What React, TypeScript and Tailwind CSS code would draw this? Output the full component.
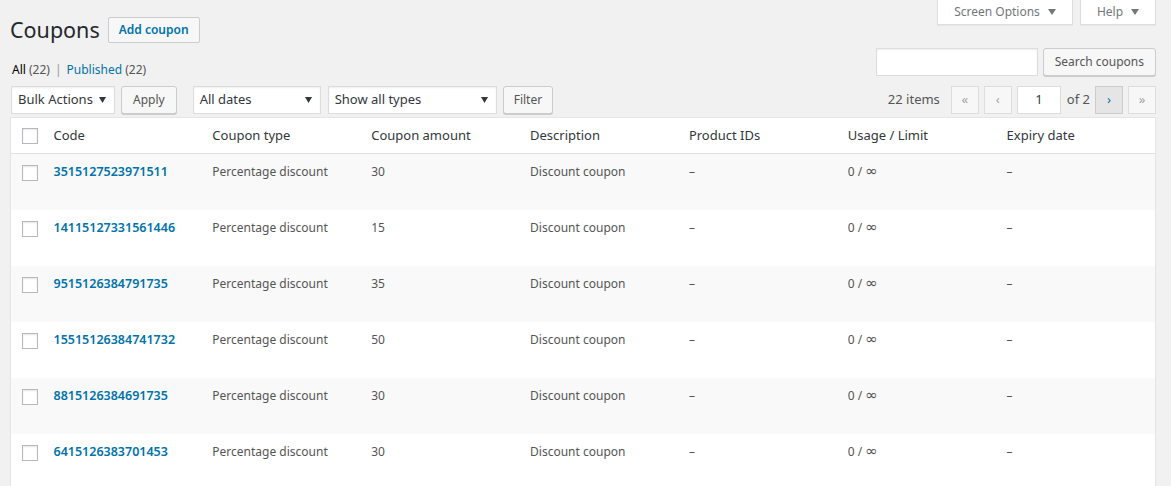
import React from "react";

const rows = [
  { code: "3515127523971511", amount: "30" },
  { code: "14115127331561446", amount: "15" },
  { code: "9515126384791735", amount: "35" },
  { code: "15515126384741732", amount: "50" },
  { code: "8815126384691735", amount: "30" },
  { code: "6415126383701453", amount: "30" },
];

function Checkbox() {
  return (
    <span className="block w-4 h-4 bg-white border border-[#b4b9be] shadow-[inset_0_1px_2px_rgba(0,0,0,0.1)]" />
  );
}

function Caret() {
  return (
    <svg width="7" height="6" viewBox="0 0 7 6" className="shrink-0">
      <path d="M0 0 L7 0 L3.5 6 Z" fill="#32373c" />
    </svg>
  );
}

function Select({ label, width }: { label: string; width: string }) {
  return (
    <div
      className={`${width} h-[28px] bg-white border border-[#ddd] shadow-[inset_0_1px_2px_rgba(0,0,0,0.07)] flex items-center justify-between pl-[6px] pr-[8px] text-[13px] text-[#32373c] whitespace-nowrap`}
    >
      <span>{label}</span>
      <Caret />
    </div>
  );
}

function Button({ children, className = "" }: { children: React.ReactNode; className?: string }) {
  return (
    <div
      className={`h-[28px] flex items-center bg-[#f7f7f7] border border-[#ccc] rounded-[3px] shadow-[0_1px_0_#ccc] text-[12px] text-[#555] whitespace-nowrap ${className}`}
    >
      {children}
    </div>
  );
}

function PageBtn({ children, active = false }: { children: React.ReactNode; active?: boolean }) {
  return (
    <div
      className={`w-[28px] h-[28px] flex items-center justify-center border text-[13px] ${
        active ? "bg-[#e5e5e5] border-[#ccc] text-[#0073aa]" : "bg-[#f7f7f7] border-[#ddd] text-[#a0a5aa]"
      }`}
    >
      {children}
    </div>
  );
}

const inf = (
  <span style={{ fontFamily: '"DejaVu Sans", sans-serif' }} className="text-[15px] leading-none">
    ∞
  </span>
);

export default function App() {
  return (
    <div
      className="relative w-[1171px] h-[486px] overflow-hidden bg-[#f1f1f1] text-[12px] text-[#444]"
      style={{ fontFamily: '"Noto Sans", "Open Sans", sans-serif' }}
    >
      {/* Screen meta tabs */}
      <div className="absolute top-0 right-[15px] flex gap-[7px]">
        <div className="w-[136px] h-[25px] bg-white border border-t-0 border-[#ddd] shadow-[0_1px_1px_rgba(0,0,0,0.04)] flex items-center justify-center gap-[8px] text-[12px] text-[#72777c]">
          <span>Screen Options</span>
          <svg width="8" height="6" viewBox="0 0 8 6"><path d="M0 0 L8 0 L4 6 Z" fill="#72777c" /></svg>
        </div>
        <div className="w-[76px] h-[25px] bg-white border border-t-0 border-[#ddd] shadow-[0_1px_1px_rgba(0,0,0,0.04)] flex items-center justify-center gap-[8px] text-[12px] text-[#72777c]">
          <span>Help</span>
          <svg width="8" height="6" viewBox="0 0 8 6"><path d="M0 0 L8 0 L4 6 Z" fill="#72777c" /></svg>
        </div>
      </div>

      <div className="pl-[10px] pr-[15px] pt-[17px]">
        {/* Title row */}
        <div className="flex items-center gap-[8px] h-[26px]">
          <h1 className="text-[21.5px] font-normal text-[#23282d] leading-none pb-[1px]">Coupons</h1>
          <div className="h-[26px] px-[10px] flex items-center bg-[#f7f7f7] border border-[#ccc] rounded-[2px] text-[12px] font-semibold text-[#0073aa]">
            Add coupon
          </div>
        </div>

        {/* Subsubsub + search */}
        <div className="flex justify-between items-end mt-[5px]">
          <div className="text-[12px] leading-[18px] mb-[-3px] pl-[2px]">
            <span className="text-black">All</span> <span className="text-[#555]">(22)</span>
            <span className="text-[#999] mx-[5px]">|</span>
            <span className="text-[#0073aa]">Published</span> <span className="text-[#555]">(22)</span>
          </div>
          <div className="flex items-center gap-[5px]">
            <div className="w-[162px] h-[28px] bg-white border border-[#ddd] shadow-[inset_0_1px_2px_rgba(0,0,0,0.07)]" />
            <Button className="px-[11px]">Search coupons</Button>
          </div>
        </div>

        {/* Tablenav */}
        <div className="flex justify-between items-center mt-[10px] h-[28px]">
          <div className="flex items-center pl-[1px]">
            <Select label="Bulk Actions" width="w-[104px]" />
            <Button className="ml-[6px] px-[11px]">Apply</Button>
            <Select label="All dates" width="w-[128px] ml-[16px]" />
            <Select label="Show all types" width="w-[169px] ml-[7px]" />
            <Button className="ml-[6px] px-[10px]">Filter</Button>
          </div>
          <div className="flex items-center text-[12px] text-[#555]">
            <span className="mr-[11px] text-[13px]">22 items</span>
            <PageBtn>«</PageBtn>
            <div className="ml-[5px]"><PageBtn>‹</PageBtn></div>
            <div className="ml-[5px] w-[44px] h-[28px] bg-white border border-[#ddd] flex items-center justify-center text-[13px] text-[#32373c]">1</div>
            <span className="ml-[6px] mr-[5px] text-[13px] text-[#555]">of 2</span>
            <PageBtn active>›</PageBtn>
            <div className="ml-[5px]"><PageBtn>»</PageBtn></div>
          </div>
        </div>

        {/* Table */}
        <table className="mt-[3px] w-full table-fixed border-collapse bg-white border border-[#e5e5e5] shadow-[0_1px_1px_rgba(0,0,0,0.04)]">
          <colgroup>
            <col className="w-[33px]" />
            <col />
            <col />
            <col />
            <col />
            <col />
            <col />
            <col />
          </colgroup>
          <thead>
            <tr className="h-[36px] border-b border-[#e1e1e1] text-left text-[13px] text-[#32373c]">
              <th className="pl-[11px] align-middle font-normal"><Checkbox /></th>
              <th className="px-[10px] font-normal">Code</th>
              <th className="px-[10px] font-normal">Coupon type</th>
              <th className="px-[10px] font-normal">Coupon amount</th>
              <th className="px-[10px] font-normal">Description</th>
              <th className="px-[10px] font-normal">Product IDs</th>
              <th className="px-[10px] font-normal">Usage / Limit</th>
              <th className="px-[10px] font-normal">Expiry date</th>
            </tr>
          </thead>
          <tbody>
            {rows.map((r, i) => (
              <tr key={r.code} className={`h-[56px] text-[12px] text-[#555] ${i % 2 === 0 ? "bg-[#f9f9f9]" : "bg-white"}`}>
                <td className="pl-[11px] pt-[11px] align-top"><Checkbox /></td>
                <td className="px-[10px] pt-[9px] align-top leading-[18px] text-[12.5px] font-semibold text-[#0073aa]">{r.code}</td>
                <td className="px-[10px] pt-[9px] align-top leading-[18px]">Percentage discount</td>
                <td className="px-[10px] pt-[9px] align-top leading-[18px]">{r.amount}</td>
                <td className="px-[10px] pt-[9px] align-top leading-[18px]">Discount coupon</td>
                <td className="px-[10px] pt-[9px] align-top leading-[18px]">–</td>
                <td className="px-[10px] pt-[9px] align-top leading-[18px]">0 / {inf}</td>
                <td className="px-[10px] pt-[9px] align-top leading-[18px]">–</td>
              </tr>
            ))}
          </tbody>
        </table>
      </div>
    </div>
  );
}
